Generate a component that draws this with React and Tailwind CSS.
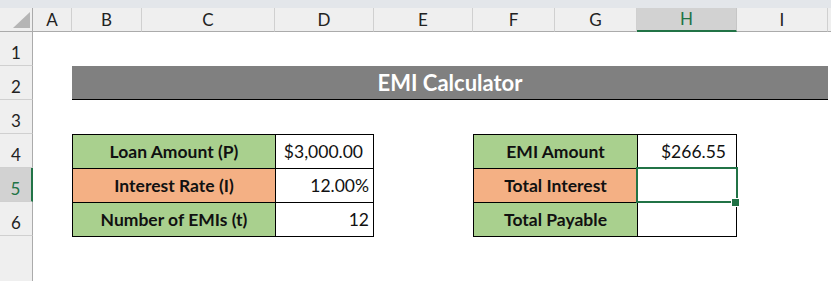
const columns = [
  { key: 'A' },
  { key: 'B' },
  { key: 'C' },
  { key: 'D' },
  { key: 'E' },
  { key: 'F' },
  { key: 'G' },
  { key: 'H', active: true },
  { key: 'I' },
];

const rowHeads = [
  { n: 1, place: 'row-start-2' },
  { n: 2, place: 'row-start-3' },
  { n: 3, place: 'row-start-4' },
  { n: 4, place: 'row-start-5' },
  { n: 5, place: 'row-start-6', active: true },
  { n: 6, place: 'row-start-7' },
];

const loanRows = [
  { label: 'Loan Amount (P)', value: '$3,000.00', tone: 'bg-[#a9d08e]', pad: 'pr-[10px]' },
  { label: 'Interest Rate (I)', value: '12.00%', tone: 'bg-[#f4b084]', pad: 'pr-[4px]' },
  { label: 'Number of EMIs (t)', value: '12', tone: 'bg-[#a9d08e]', pad: 'pr-[4px]' },
];

const resultRows = [
  { label: 'EMI Amount', value: '$266.55', tone: 'bg-[#a9d08e]', pad: 'pr-[10px]' },
  { label: 'Total Interest', value: '', tone: 'bg-[#f4b084]', pad: 'pr-[4px]' },
  { label: 'Total Payable', value: '', tone: 'bg-[#a9d08e]', pad: 'pr-[4px]' },
];

function InfoTable({ rows, labelWidth, place }) {
  return (
    <div className={`${place} self-start h-[103px] grid ${labelWidth} grid-rows-3 gap-px p-px bg-black`}>
      {rows.map((r) => (
        <div key={r.label} className="contents">
          <div className={`${r.tone} flex items-center justify-center pt-[2px] text-[17.5px] font-bold`}>
            {r.label}
          </div>
          <div className={`bg-white flex items-center justify-end pt-[2px] text-[17.5px] ${r.pad}`}>
            {r.value}
          </div>
        </div>
      ))}
    </div>
  );
}

export default function App() {
  return (
    <div className="w-[831px] h-[281px] overflow-hidden bg-white font-['Lato',sans-serif] text-[#111]">
      <div className="h-[8px] bg-[#e3e6ea]" />
      <div className="grid h-[273px] grid-cols-[33px_39px_70px_133px_99px_99px_82px_82px_100px_91px_1fr] grid-rows-[24px_repeat(6,34px)_1fr]">
        {/* corner select-all button */}
        <div className="col-start-1 row-start-1 relative bg-[#efefef] border-r border-b border-[#ababab]">
          <svg className="absolute left-0 top-0" width="33" height="24" viewBox="0 0 33 24">
            <polygon points="13,20 30,20 30,4" fill="#b5b5b5" />
          </svg>
        </div>

        {columns.map((c) =>
          c.active ? (
            <div
              key={c.key}
              className="row-start-1 flex items-center justify-center bg-[#d2d2d2] border-r border-[#c6c6c6] border-b-2 border-b-[#217346] text-[17px] text-[#217346]"
            >
              {c.key}
            </div>
          ) : (
            <div
              key={c.key}
              className="row-start-1 flex items-center justify-center bg-[#efefef] border-r border-[#d0d0d0] border-b border-b-[#ababab] text-[17px] text-[#222]"
            >
              {c.key}
            </div>
          )
        )}
        <div className="row-start-1 col-start-11 bg-[#efefef] border-b border-[#ababab]" />

        {rowHeads.map((r) =>
          r.active ? (
            <div
              key={r.n}
              className={`${r.place} col-start-1 flex items-end justify-center pb-[4px] leading-none bg-[#d2d2d2] border-b border-[#d0d0d0] border-r-2 border-r-[#217346] text-[17px] text-[#217346]`}
            >
              {r.n}
            </div>
          ) : (
            <div
              key={r.n}
              className={`${r.place} col-start-1 flex items-end justify-center pb-[4px] leading-none bg-[#efefef] border-b border-[#d0d0d0] border-r border-r-[#ababab] text-[17px] text-[#222]`}
            >
              {r.n}
            </div>
          )
        )}
        <div className="row-start-8 col-start-1 bg-[#efefef] border-r border-[#ababab]" />

        {/* title banner across B:I */}
        <div className="row-start-3 col-start-3 col-end-11 flex items-center justify-center bg-[#808080] border-b border-black text-[22px] font-bold text-white">
          EMI Calculator
        </div>

        <InfoTable rows={loanRows} labelWidth="grid-cols-[202px_1fr]" place="row-start-5 row-end-8 col-start-3 col-end-6" />
        <InfoTable rows={resultRows} labelWidth="grid-cols-[163px_1fr]" place="row-start-5 row-end-8 col-start-7 col-end-10" />

        {/* active cell H5 */}
        <div className="row-start-6 col-start-9 relative">
          <div className="absolute -left-px -top-px w-[102px] h-[36px] border-2 border-[#217346]" />
          <div className="absolute left-[94px] top-[30px] w-[9px] h-[9px] bg-[#217346] border border-white" />
        </div>
      </div>
    </div>
  );
}
